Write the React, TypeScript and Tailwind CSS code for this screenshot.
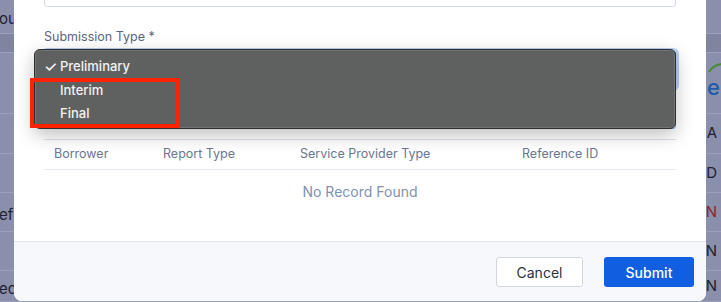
import React from "react";

const bgRows = [
  { left: "ou", right: "", h: "h-[34px]", band: false },
  { left: "", right: "", h: "h-[19px]", band: true },
  { left: "", right: "e", h: "h-[61px]", band: false },
  { left: "", right: "A", h: "h-[40px]", band: false },
  { left: "", right: "D", h: "h-[39px]", band: false },
  { left: "ef", right: "N", h: "h-[39px]", band: false, red: true },
  { left: "", right: "N", h: "h-[39px]", band: false },
  { left: "ec", right: "N", h: "h-[31px]", band: false },
];

const columns = [
  { label: "Borrower", w: "w-[109px]" },
  { label: "Report Type", w: "w-[137px]" },
  { label: "Service Provider Type", w: "w-[222px]" },
  { label: "Reference ID", w: "flex-1" },
];

export default function App() {
  return (
    <div className="relative w-[721px] h-[302px] overflow-hidden bg-[#8a8fab] font-['Inter',sans-serif]">
      {/* page behind the overlay */}
      <div className="flex flex-col">
        {bgRows.map((r, i) => (
          <div
            key={i}
            className={`${r.h} flex items-center justify-between border-b border-[#9ca1bb] text-[15px] text-[#1d2233] ${
              r.band ? "bg-[#7f849f]" : ""
            }`}
          >
            <span className="-ml-[1px] pt-[6px]">{r.left}</span>
            {r.right === "e" ? (
              <span className="relative mr-[1px] mt-[8px] text-[22px] font-medium text-[#1e5aa8]">
                <svg className="absolute -top-[8px] left-[1px]" width="14" height="10" viewBox="0 0 14 10">
                  <path d="M1 9 Q5 2 14 1" stroke="#4b8a3e" strokeWidth="2" fill="none" />
                </svg>
                e
              </span>
            ) : (
              <span className={`mr-[4px] ${r.red ? "text-[#8a2330]" : ""}`}>{r.right}</span>
            )}
          </div>
        ))}
      </div>

      {/* modal */}
      <div className="absolute left-[14px] top-[-40px] w-[692px] h-[341px] bg-white rounded-[8px] flex flex-col overflow-hidden">
        <div className="flex-1 px-[30px] pt-[10px]">
          <div className="h-[37px] border border-[#d3d8e6] rounded-[3px]" />
          <div className="mt-[21px] text-[12.5px] text-[#5c667b] leading-[18px]">Submission Type *</div>
          <div className="mt-[5px] h-[37px] border border-[#2f6fe0] rounded-[3px] ring-[3px] ring-[#b9cff5]" />
          <div className="mt-[20px] h-[21px] border border-[#8fb0ec] rounded-[3px]" />
          <div className="mt-[10px] border-t border-[#dde1ea]">
            <div className="flex h-[30px] items-center border-b border-[#e6e9f0] text-[12.5px] text-[#6c7690]">
              {columns.map((c) => (
                <div key={c.label} className={`${c.w} pl-[10px]`}>
                  {c.label}
                </div>
              ))}
            </div>
            <div className="h-[42px] flex items-center justify-center text-[14px] text-[#8191ae]">No Record Found</div>
          </div>
        </div>
        <div className="h-[60px] bg-[#f7f8fc] border-t border-[#e1e4ec] flex items-center justify-end gap-[21px] pr-[12px] pt-[1px]">
          <button className="w-[87px] h-[30px] bg-white border border-[#d2d6de] rounded-[3px] text-[14px] text-[#2b3140]">
            Cancel
          </button>
          <button className="w-[90px] h-[30px] bg-[#0f5fe0] rounded-[3px] text-[14px] text-white font-medium">
            Submit
          </button>
        </div>
      </div>

      {/* native select menu */}
      <div className="absolute left-[34px] top-[49px] w-[642px] h-[80px] rounded-[6px] bg-[#5f6161] border border-[#2e2f30] shadow-[0_6px_18px_rgba(0,0,0,0.25),inset_0_0_0_1px_rgba(255,255,255,0.12)] pt-[5px] text-[13px] font-medium text-[#f2f2f2]">
        <div className="h-[23.5px] flex items-center">
          <span className="w-[25px] pl-[9px] text-[15px] leading-none">✓</span>
          <span>Preliminary</span>
        </div>
        <div className="h-[23.5px] flex items-center pl-[25px]">Interim</div>
        <div className="h-[23.5px] flex items-center pl-[25px]">Final</div>
      </div>

      {/* annotation */}
      <div className="absolute left-[30px] top-[78px] w-[150px] h-[50px] border-[4px] border-[#ff2200]" />
    </div>
  );
}
